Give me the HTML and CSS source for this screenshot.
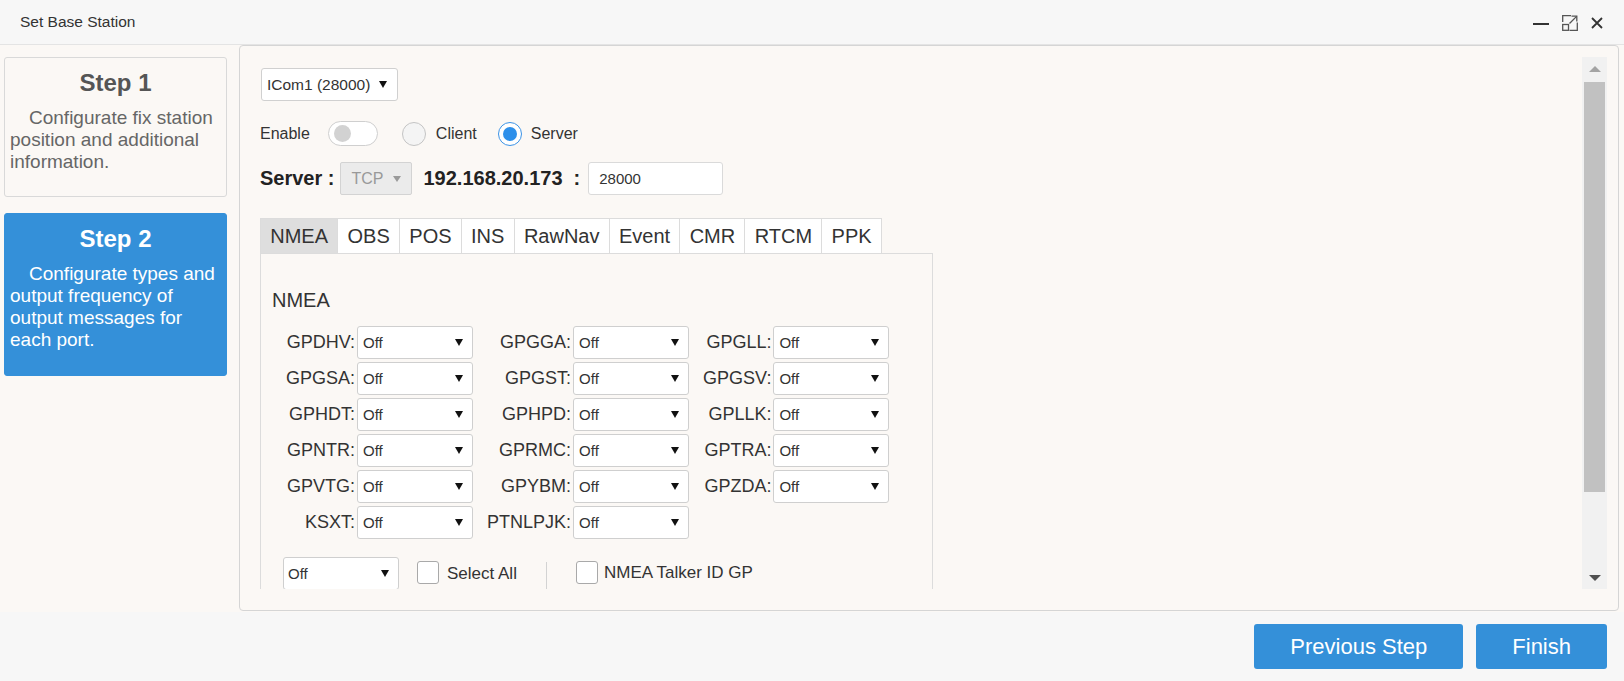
FILE: index.html
```html
<!DOCTYPE html>
<html>
<head>
<meta charset="utf-8">
<title>Set Base Station</title>
<link rel="stylesheet" href="styles.css">
</head>
<body>
<div class="window">
  <header class="titlebar">
    <span class="title">Set Base Station</span>
    <div class="win-icons">
      <svg class="ic" width="16" height="16" viewBox="0 0 16 16"><path d="M0 9h16" stroke="#333" stroke-width="2" fill="none"/></svg>
      <svg class="ic" width="16" height="16" viewBox="0 0 16 16" fill="none" stroke="#555" stroke-width="1.3"><path d="M0.7 7V0.7H9"/><path d="M15.3 7.5V15.3H7.5"/><rect x="0.7" y="9.5" width="5.8" height="5.8"/><path d="M7.5 8.5L14.6 1.4"/><path d="M9.5 1.2H14.8V6.5"/></svg>
      <svg class="ic" width="12" height="12" viewBox="0 0 12 12"><path d="M1 1L11 11M11 1L1 11" stroke="#333" stroke-width="1.8" fill="none"/></svg>
    </div>
  </header>

  <div class="body-row">
    <aside class="steps">
      <div class="step">
        <div class="step-title">Step 1</div>
        <div class="step-desc">Configurate fix station position and additional information.</div>
      </div>
      <div class="step active">
        <div class="step-title">Step 2</div>
        <div class="step-desc">Configurate types and output frequency of output messages for each port.</div>
      </div>
    </aside>

    <main class="panel">
      <div class="scroll">
        <div class="port-select"><span>ICom1 (28000)</span><i class="tri"></i></div>

        <div class="enable-row">
          <span class="lbl16">Enable</span>
          <span class="toggle"><span class="knob"></span></span>
          <span class="radio"></span><span class="radio-label">Client</span>
          <span class="radio on"><span class="dot"></span></span><span class="radio-label">Server</span>
        </div>

        <div class="server-row">
          <span class="bold20">Server :</span>
          <span class="proto"><span>TCP</span><i class="tri small"></i></span>
          <span class="bold20 ip">192.168.20.173</span>
          <span class="bold20 colon">:</span>
          <span class="port-input">28000</span>
        </div>

        <div class="tabs">
          <span class="tab active">NMEA</span>
          <span class="tab">OBS</span>
          <span class="tab">POS</span>
          <span class="tab">INS</span>
          <span class="tab">RawNav</span>
          <span class="tab">Event</span>
          <span class="tab">CMR</span>
          <span class="tab">RTCM</span>
          <span class="tab">PPK</span>
        </div>

        <div class="tab-panel">
          <div class="section-title">NMEA</div>
          <div class="msg-grid">
            <span class="lab">GPDHV:</span><span class="sel"><span>Off</span><i class="tri"></i></span>
            <span class="lab">GPGGA:</span><span class="sel"><span>Off</span><i class="tri"></i></span>
            <span class="lab">GPGLL:</span><span class="sel"><span>Off</span><i class="tri"></i></span>

            <span class="lab">GPGSA:</span><span class="sel"><span>Off</span><i class="tri"></i></span>
            <span class="lab">GPGST:</span><span class="sel"><span>Off</span><i class="tri"></i></span>
            <span class="lab">GPGSV:</span><span class="sel"><span>Off</span><i class="tri"></i></span>

            <span class="lab">GPHDT:</span><span class="sel"><span>Off</span><i class="tri"></i></span>
            <span class="lab">GPHPD:</span><span class="sel"><span>Off</span><i class="tri"></i></span>
            <span class="lab">GPLLK:</span><span class="sel"><span>Off</span><i class="tri"></i></span>

            <span class="lab">GPNTR:</span><span class="sel"><span>Off</span><i class="tri"></i></span>
            <span class="lab">GPRMC:</span><span class="sel"><span>Off</span><i class="tri"></i></span>
            <span class="lab">GPTRA:</span><span class="sel"><span>Off</span><i class="tri"></i></span>

            <span class="lab">GPVTG:</span><span class="sel"><span>Off</span><i class="tri"></i></span>
            <span class="lab">GPYBM:</span><span class="sel"><span>Off</span><i class="tri"></i></span>
            <span class="lab">GPZDA:</span><span class="sel"><span>Off</span><i class="tri"></i></span>

            <span class="lab">KSXT:</span><span class="sel"><span>Off</span><i class="tri"></i></span>
            <span class="lab">PTNLPJK:</span><span class="sel"><span>Off</span><i class="tri"></i></span>
          </div>

          <div class="bulk-row">
            <span class="sel bulk"><span>Off</span><i class="tri"></i></span>
            <span class="check first"></span><span class="check-label">Select All</span>
            <span class="vsep"></span>
            <span class="check second"></span><span class="check-label talker">NMEA Talker ID GP</span>
          </div>
        </div>
      </div>

      <div class="scrollbar">
        <div class="sb-btn"><i class="sb-up"></i></div>
        <div class="sb-thumb"></div>
        <div class="sb-track"></div>
        <div class="sb-btn"><i class="sb-down"></i></div>
      </div>
    </main>
  </div>

  <footer class="footer">
    <button class="btn">Previous Step</button>
    <button class="btn">Finish</button>
  </footer>
</div>
</body>
</html>
```

FILE: styles.css
```css
* { box-sizing: border-box; }
html, body { margin: 0; padding: 0; }
body {
  width: 1624px;
  height: 681px;
  overflow: hidden;
  background: #f7f7f7;
  font-family: "Liberation Sans", Arial, sans-serif;
  color: #333;
}
.window { display: flex; flex-direction: column; height: 681px; }

/* title bar */
.titlebar {
  height: 45px;
  flex: none;
  display: flex;
  align-items: center;
  justify-content: space-between;
  padding: 0 21px 0 20px;
  border-bottom: 1px solid #e4e4e4;
  background: #f7f7f7;
}
.title { font-size: 15.5px; color: #333; padding-bottom: 1px; }
.win-icons { display: flex; align-items: center; gap: 13px; padding-top: 2px; }
.ic { display: block; }

/* body */
.body-row { display: flex; height: 567px; flex: none; background: #fbf8f5; }
.steps {
  width: 239px;
  flex: none;
  padding: 12px 12px 0 4px;
  display: flex;
  flex-direction: column;
  gap: 16px;
}
.step {
  height: 140px;
  border: 1px solid #d9d9d9;
  border-radius: 3px;
  background: #fbf8f5;
  padding: 10px 5px 0 5px;
}
.step.active { height: 163px; background: #3490d9; border-color: #3490d9; }
.step-title {
  font-size: 24px;
  font-weight: bold;
  line-height: 30px;
  text-align: center;
  color: #555;
}
.step-desc {
  margin-top: 9px;
  font-size: 19px;
  line-height: 22px;
  text-indent: 19px;
  color: #666;
}
.active .step-title, .active .step-desc { color: #fff; }

/* main panel */
.panel {
  width: 1380px;
  height: 566px;
  flex: none;
  border: 1px solid #d5d5d5;
  border-radius: 4px;
  background: #fbf8f5;
  padding: 11px 11px 21px 10px;
  display: flex;
}
.scroll { flex: 1; overflow: hidden; padding: 11px 0 0 10px; }

.tri {
  display: block;
  width: 0; height: 0;
  border-left: 4px solid transparent;
  border-right: 4px solid transparent;
  border-top: 7px solid #111;
}
.tri.small { border-left-width: 4px; border-right-width: 4px; border-top: 6px solid #9a9a9a; }

.port-select {
  margin-left: 1px;
  width: 137px;
  height: 33px;
  display: flex;
  align-items: center;
  justify-content: space-between;
  padding: 0 10px 0 5px;
  background: #fff;
  border: 1px solid #d0d0d0;
  border-radius: 3px;
  font-size: 15.5px;
  color: #333;
}

.enable-row { margin-top: 20px; height: 25px; display: flex; align-items: center; }
.lbl16 { font-size: 16px; color: #333; }
.toggle {
  margin-left: 18px;
  width: 50px;
  height: 25px;
  border: 1px solid #cfcfcf;
  border-radius: 13px;
  background: #fff;
  display: flex;
  align-items: center;
  padding-left: 5px;
}
.knob { width: 17px; height: 17px; border-radius: 50%; background: #d2d2d2; }
.radio {
  width: 24px;
  height: 24px;
  border-radius: 50%;
  border: 1px solid #c4c4c4;
  background: #f4f4f4;
  margin-left: 24px;
  display: flex;
  align-items: center;
  justify-content: center;
}
.radio.on { margin-left: 21px; border: 1.5px solid #3b93e6; background: #fff; }
.dot { width: 14px; height: 14px; border-radius: 50%; background: #2e90ea; }
.radio-label { margin-left: 10px; font-size: 16px; color: #333; }
.radio.on + .radio-label { margin-left: 9px; }

.server-row { margin-top: 16px; height: 33px; display: flex; align-items: center; }
.bold20 { font-size: 20px; font-weight: bold; color: #222; }
.proto {
  margin-left: 5px;
  width: 72px;
  height: 33px;
  display: flex;
  align-items: center;
  justify-content: space-between;
  padding: 0 10px 0 11px;
  background: #ebebeb;
  border: 1px solid #d3d3d3;
  border-radius: 2px;
  font-size: 16px;
  color: #999;
}
.ip { margin-left: 12px; }
.colon { margin-left: 11px; }
.port-input {
  margin-left: 8px;
  width: 135px;
  height: 33px;
  display: flex;
  align-items: center;
  padding-left: 10px;
  background: #fff;
  border: 1px solid #dadada;
  border-radius: 3px;
  font-size: 15px;
  color: #333;
}

/* tabs */
.tabs { margin-top: 23px; display: flex; height: 35px; }
.tab {
  height: 35px;
  padding: 0 9.25px;
  border: 1px solid #dcdcdc;
  border-bottom: none;
  margin-left: -1px;
  background: #fff;
  font-size: 20px;
  line-height: 34px;
  color: #333;
}
.tab:first-child { margin-left: 0; }
.tab.active { background: #dedede; }

.tab-panel {
  width: 673px;
  border: 1px solid #dcdcdc;
  background: #fbf8f5;
  padding: 35px 11px 60px 11px;
}
.section-title { font-size: 20px; line-height: 23px; color: #333; }

.msg-grid {
  margin-top: 14px;
  margin-left: 14px;
  display: grid;
  grid-template-columns: auto 116px auto 116px auto 116px;
  grid-auto-rows: 33px;
  row-gap: 3px;
  justify-content: start;
}
.lab {
  align-self: center;
  text-align: right;
  padding-right: 2px;
  padding-left: 14px;
  font-size: 18px;
  color: #333;
}
.lab:nth-child(6n+1) { padding-left: 0; }
.sel {
  height: 33px;
  display: flex;
  align-items: center;
  justify-content: space-between;
  padding: 0 9px 0 5px;
  background: #fff;
  border: 1px solid #cfcfcf;
  border-radius: 3px;
  font-size: 15px;
  color: #333;
}

.bulk-row { margin-top: 18px; margin-left: 11px; display: flex; align-items: center; height: 33px; }
.sel.bulk { width: 116px; padding-left: 4px; }
.check {
  width: 22px;
  height: 23px;
  border: 1px solid #a9a9a9;
  border-radius: 3px;
  background: #fff;
  margin-top: -3px;
}
.check.first { margin-left: 18px; }
.check.second { margin-left: 29px; }
.check-label { margin-left: 8px; font-size: 17px; color: #333; }
.check-label.talker { margin-left: 6px; margin-top: -1px; }
.vsep { margin-left: 29px; width: 1px; height: 30px; margin-top: 6px; background: #d3d3d3; }

/* fake scrollbar */
.scrollbar {
  width: 25px;
  flex: none;
  background: #f1f1f1;
  display: flex;
  flex-direction: column;
  align-items: center;
}
.sb-btn { height: 23px; width: 25px; flex: none; display: flex; align-items: center; justify-content: center; }
.sb-up {
  width: 0; height: 0;
  border-left: 6px solid transparent;
  border-right: 6px solid transparent;
  border-bottom: 6px solid #a3a3a3;
}
.sb-down {
  width: 0; height: 0;
  border-left: 6px solid transparent;
  border-right: 6px solid transparent;
  border-top: 6px solid #505050;
}
.sb-thumb { width: 21px; height: 410px; margin-top: 2px; background: #c1c1c1; flex: none; }
.sb-track { flex: 1; }

/* footer */
.footer {
  flex: 1;
  display: flex;
  justify-content: flex-end;
  align-items: flex-start;
  gap: 13px;
  padding: 12px 17px 0 0;
  background: #f7f7f7;
}
.btn {
  height: 45px;
  padding: 0 36px;
  border: none;
  border-radius: 3px;
  background: #3490d9;
  color: #fff;
  font-family: "Liberation Sans", Arial, sans-serif;
  font-size: 22px;
  line-height: 45px;
}
```
